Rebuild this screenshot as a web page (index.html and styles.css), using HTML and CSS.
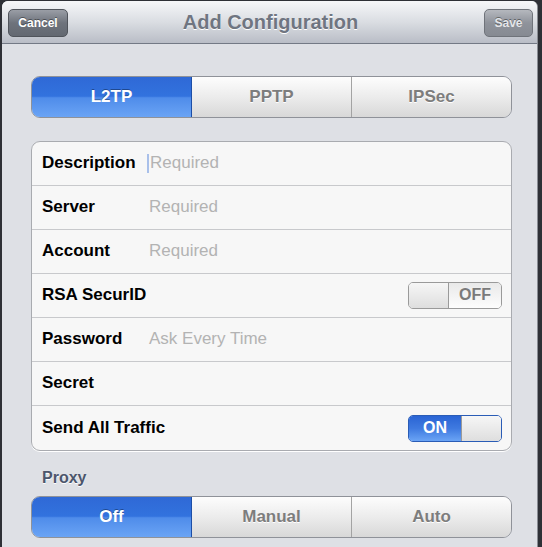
FILE: index.html
```html
<!DOCTYPE html>
<html lang="en">
<head>
    <meta charset="UTF-8">
    <meta name="viewport" content="width=device-width, initial-scale=1.0">
    <title>Add Configuration</title>
    <link rel="stylesheet" href="styles.css">
</head>
<body>
    <div class="sheet">
        <div class="navBar">
            <button class="navButton cancel">Cancel</button>
            <h1 class="navTitle">Add Configuration</h1>
            <button class="navButton save">Save</button>
        </div>

        <div class="content">
            <div class="segmented">
                <div class="segment selected">L2TP</div>
                <div class="segment">PPTP</div>
                <div class="segment">IPSec</div>
            </div>

            <div class="group">
                <div class="row">
                    <span class="label">Description</span>
                    <span class="value"><span class="caret"></span>Required</span>
                </div>
                <div class="row">
                    <span class="label">Server</span>
                    <span class="value">Required</span>
                </div>
                <div class="row">
                    <span class="label">Account</span>
                    <span class="value">Required</span>
                </div>
                <div class="row">
                    <span class="label">RSA SecurID</span>
                    <div class="switch off">
                        <span class="knob"></span>
                        <span class="switchText">OFF</span>
                    </div>
                </div>
                <div class="row">
                    <span class="label">Password</span>
                    <span class="value">Ask Every Time</span>
                </div>
                <div class="row">
                    <span class="label">Secret</span>
                </div>
                <div class="row">
                    <span class="label">Send All Traffic</span>
                    <div class="switch on">
                        <span class="switchText">ON</span>
                        <span class="knob"></span>
                    </div>
                </div>
            </div>

            <div class="sectionHeader">Proxy</div>
            <div class="segmented">
                <div class="segment selected">Off</div>
                <div class="segment">Manual</div>
                <div class="segment">Auto</div>
            </div>
        </div>
    </div>
</body>
</html>
```

FILE: styles.css
```css
body {
    font-family: 'Liberation Sans', Arial, sans-serif;
    background-color: #2e3036;
    margin: 0;
    padding: 0;
    height: 547px;
    overflow: hidden;
}

.sheet {
    margin: 1px 4px 0 2px;
    height: 546px;
    background-color: #dee0e5;
    border-radius: 6px 6px 0 0;
    overflow: hidden;
    border-right: 1px solid #8a8d94;
}

.navBar {
    height: 42px;
    display: grid;
    grid-template-columns: 1fr auto 1fr;
    align-items: center;
    padding: 0 4px 0 6px;
    background: linear-gradient(#f6f7f9, #dadde2 50%, #b9bdc6);
    border-bottom: 1px solid #737985;
}

.navTitle {
    margin: 0;
    font-size: 20px;
    font-weight: bold;
    color: #6f7581;
    text-shadow: 0 1px 0 #fff;
}

.navButton {
    height: 28px;
    border-radius: 5px;
    font-family: 'Liberation Sans', Arial, sans-serif;
    font-size: 12px;
    font-weight: bold;
    color: #fff;
    padding: 0 9px;
    margin-top: 1px;
    text-shadow: 0 -1px 0 rgba(0, 0, 0, 0.4);
}

.cancel {
    justify-self: start;
    width: 60px;
    background: linear-gradient(#9a9ea6, #6e737c 50%, #636871);
    border: 1px solid #50545b;
}

.save {
    justify-self: end;
    width: 49px;
    color: #e4e6e9;
    background: linear-gradient(#b5b8be, #8f939b 50%, #868a92);
    border: 1px solid #6f737a;
}

.content {
    padding: 32px 25px 0 29px;
}

.segmented {
    display: flex;
    height: 40px;
    border: 1px solid #8f9299;
    border-radius: 9px;
    overflow: hidden;
}

.segment {
    flex: 1;
    display: flex;
    align-items: center;
    justify-content: center;
    font-size: 17px;
    font-weight: bold;
    color: #7d7d7d;
    text-shadow: 0 1px 0 #fff;
    background: linear-gradient(#fdfdfd, #ececec 50%, #d8d8d8);
    border-left: 1px solid #a3a3a3;
}

.segment:first-child {
    border-left: none;
}

.segment.selected {
    color: #fff;
    text-shadow: 0 -1px 0 rgba(0, 0, 0, 0.35);
    background: linear-gradient(#2f69d6, #3272de 48%, #4f8cea 52%, #6aa4f5);
    border-right: 1px solid #1d4ea6;
}

.segment.selected + .segment {
    border-left: none;
}

.group {
    margin-top: 23px;
    background-color: #f7f7f7;
    border: 1px solid #a9abb0;
    border-radius: 9px;
    box-shadow: 0 1px 0 #fff;
}

.row {
    display: flex;
    align-items: center;
    padding: 0 9px 1px 10px;
    box-sizing: border-box;
    height: 44px;
    border-top: 1px solid #c8c9cc;
}

.row:first-child {
    border-top: none;
    height: 43px;
}

.row:last-child {
    height: 45px;
    padding-bottom: 0;
}

.label {
    width: 107px;
    white-space: nowrap;
    font-size: 17px;
    font-weight: bold;
    color: #000;
}

.value {
    display: flex;
    align-items: center;
    font-size: 17px;
    color: #b3b3b3;
}

.caret {
    display: inline-block;
    width: 2px;
    height: 19px;
    background-color: #a9c0ea;
    margin: 0 1px 0 -2px;
}

.switch {
    margin-left: auto;
    width: 92px;
    height: 25px;
    border: 1px solid #9a9a9a;
    border-radius: 5px;
    display: flex;
    overflow: hidden;
}

.knob {
    width: 39px;
    background: linear-gradient(#f6f6f6, #dedede);
    border: 0 solid #9a9a9a;
}

.off .knob {
    border-right-width: 1px;
}

.on .knob {
    border-left-width: 1px;
}

.switchText {
    flex: 1;
    display: flex;
    align-items: center;
    justify-content: center;
    font-size: 16px;
    font-weight: bold;
}

.off .switchText {
    color: #7a7a7a;
    background: linear-gradient(#e9e9e9, #fdfdfd);
}

.on .switchText {
    color: #fff;
    background: linear-gradient(#2a64d4, #3f7ae0 50%, #6aa4f5);
}

.on {
    border-color: #2a5cb6;
}

.sectionHeader {
    margin: 18px 0 9px 11px;
    font-size: 16px;
    font-weight: bold;
    color: #4c566c;
    text-shadow: 0 1px 0 #fff;
}
```
